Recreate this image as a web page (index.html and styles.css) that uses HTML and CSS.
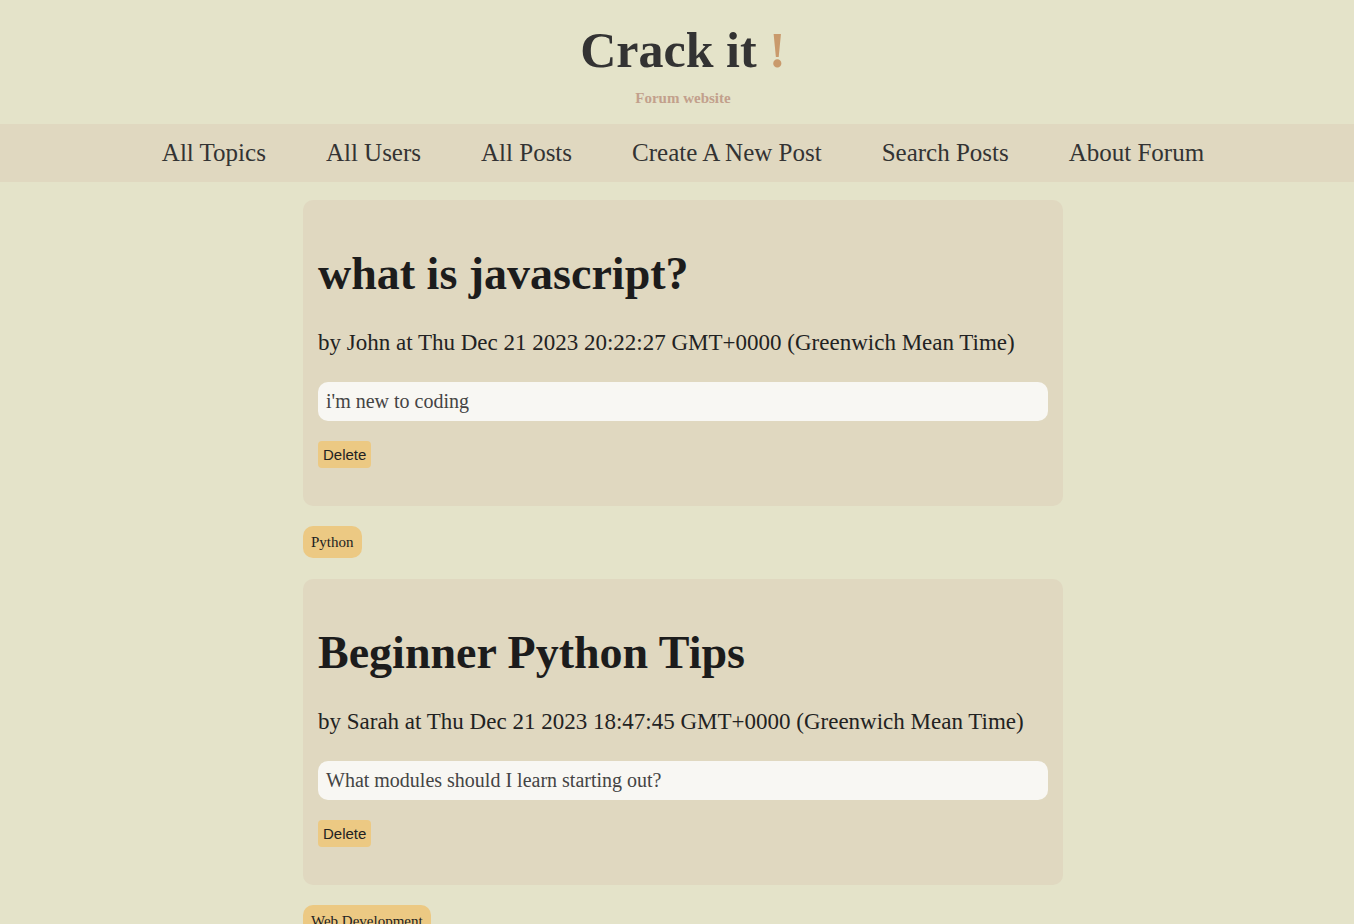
FILE: index.html
```html
<!DOCTYPE html>
<html>
<head>
<meta charset="utf-8">
<link rel="stylesheet" href="styles.css">
</head>
<body>
<header class="site-header">
  <h1 class="logo">Crack it <span class="bang">!</span></h1>
  <p class="tagline">Forum website</p>
</header>
<nav class="nav">
  <a href="#">All Topics</a>
  <a href="#">All Users</a>
  <a href="#">All Posts</a>
  <a href="#">Create A New Post</a>
  <a href="#">Search Posts</a>
  <a href="#">About Forum</a>
</nav>
<main class="posts">
  <article class="post">
    <h2 class="post-title">what is javascript?</h2>
    <p class="post-meta">by John at Thu Dec 21 2023 20:22:27 GMT+0000 (Greenwich Mean Time)</p>
    <div class="post-body">i'm new to coding</div>
    <button class="delete">Delete</button>
  </article>
  <div class="tags"><span class="tag">Python</span></div>
  <article class="post">
    <h2 class="post-title">Beginner Python Tips</h2>
    <p class="post-meta">by Sarah at Thu Dec 21 2023 18:47:45 GMT+0000 (Greenwich Mean Time)</p>
    <div class="post-body">What modules should I learn starting out?</div>
    <button class="delete">Delete</button>
  </article>
  <div class="tags"><span class="tag">Web Development</span></div>
</main>
</body>
</html>
```
FILE: styles.css
```css
html, body {
  margin: 0;
  padding: 0;
  background: #e4e3c9;
  font-family: "Liberation Serif", "Times New Roman", serif;
  color: #333;
}
.site-header {
  text-align: center;
  padding: 20px 0 0 12px;
  height: 124px;
  box-sizing: border-box;
}
.logo {
  margin: 0;
  font-size: 50px;
  line-height: 60px;
  color: #333;
}
.bang {
  color: #c99a6c;
}
.tagline {
  margin: 10px 0 0;
  font-size: 15px;
  font-weight: bold;
  color: #c2a08c;
}
.nav {
  background: #e0d8c0;
  height: 58px;
  padding-left: 12px;
  display: flex;
  justify-content: center;
  align-items: center;
  gap: 60px;
}
.nav a {
  color: #333;
  text-decoration: none;
  font-size: 25px;
}
.posts {
  width: 760px;
  margin: 18px auto 0;
  position: relative;
  left: 6px;
}
.post {
  background: #e0d8c0;
  border-radius: 10px;
  padding: 15px;
  height: 306px;
  box-sizing: border-box;
}
.post-title {
  margin: 33px 0 0;
  font-size: 46px;
  line-height: 52px;
  color: #1c1c1c;
}
.post-meta {
  margin: 29px 0 0;
  font-size: 23px;
  line-height: 28px;
  color: #222;
}
.post-body {
  margin-top: 25px;
  background: #f8f7f3;
  border-radius: 10px;
  height: 39px;
  box-sizing: border-box;
  padding: 0 8px;
  display: flex;
  align-items: center;
  font-size: 20px;
  color: #444;
}
.delete {
  display: block;
  margin-top: 20px;
  background: #ecc983;
  border: none;
  border-radius: 4px;
  height: 27px;
  padding: 0 5px;
  font-family: "Liberation Sans", Arial, sans-serif;
  font-size: 15px;
  color: #222;
}
.tags {
  padding: 20px 0 21px;
}
.tag {
  display: inline-block;
  background: #ecc983;
  border-radius: 10px;
  height: 32px;
  line-height: 33px;
  padding: 0 8px;
  font-size: 15px;
  color: #222;
}
```
